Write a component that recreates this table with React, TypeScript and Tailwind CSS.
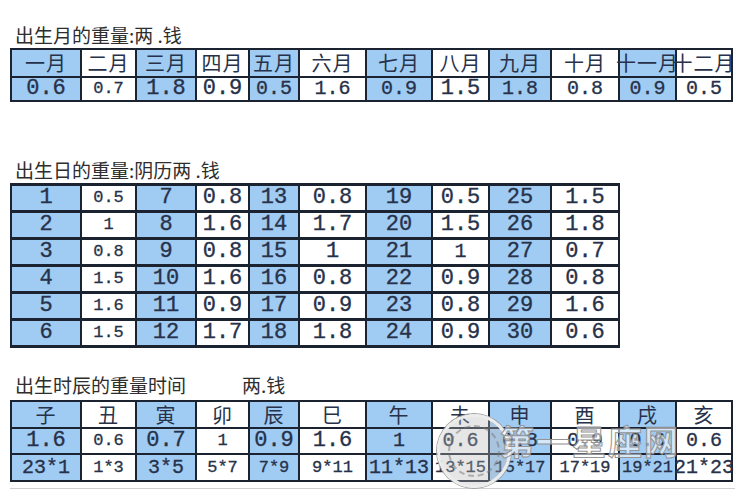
import React from "react";

const BLUE = "bg-[#a0cbf3]";
const WHITE = "bg-white";

type Cell = { t: string; s?: "sm" | "md" | "lg" | "cn" };

function C({ cell, blue, h }: { cell: Cell; blue: boolean; h: string }) {
  const size =
    cell.s === "cn"
      ? "text-[20px] tracking-[1px] font-['Noto_Sans_CJK_SC',sans-serif] font-normal"
      : cell.s === "sm"
      ? "text-[17px] font-['Liberation_Mono',monospace] [-webkit-text-stroke:0.3px_#27324a]"
      : cell.s === "md"
      ? "text-[20px] font-['Liberation_Mono',monospace] [-webkit-text-stroke:0.3px_#27324a]"
      : "text-[22px] font-['Liberation_Mono',monospace] [-webkit-text-stroke:0.35px_#27324a]";
  return (
    <div
      className={`${blue ? BLUE : WHITE} ${h} flex items-center justify-center whitespace-nowrap text-[#27324a] leading-[20px] ${size}`}
    >
      {cell.t}
    </div>
  );
}

const months = ["一月", "二月", "三月", "四月", "五月", "六月", "七月", "八月", "九月", "十月", "十一月", "十二月"];
const monthVals: Cell[] = [
  { t: "0.6" }, { t: "0.7", s: "sm" }, { t: "1.8" }, { t: "0.9" }, { t: "0.5", s: "md" }, { t: "1.6", s: "md" },
  { t: "0.9", s: "md" }, { t: "1.5" }, { t: "1.8", s: "md" }, { t: "0.8", s: "md" }, { t: "0.9", s: "md" }, { t: "0.5", s: "md" },
];

const dayRows: Cell[][] = [
  [{ t: "1" }, { t: "0.5", s: "sm" }, { t: "7" }, { t: "0.8" }, { t: "13" }, { t: "0.8" }, { t: "19" }, { t: "0.5" }, { t: "25" }, { t: "1.5" }],
  [{ t: "2" }, { t: "1", s: "sm" }, { t: "8" }, { t: "1.6" }, { t: "14" }, { t: "1.7" }, { t: "20" }, { t: "1.5" }, { t: "26" }, { t: "1.8" }],
  [{ t: "3" }, { t: "0.8", s: "sm" }, { t: "9" }, { t: "0.8" }, { t: "15" }, { t: "1" }, { t: "21" }, { t: "1", s: "md" }, { t: "27" }, { t: "0.7" }],
  [{ t: "4" }, { t: "1.5", s: "sm" }, { t: "10" }, { t: "1.6" }, { t: "16" }, { t: "0.8" }, { t: "22" }, { t: "0.9" }, { t: "28" }, { t: "0.8" }],
  [{ t: "5" }, { t: "1.6", s: "sm" }, { t: "11" }, { t: "0.9" }, { t: "17" }, { t: "0.9" }, { t: "23" }, { t: "0.8" }, { t: "29" }, { t: "1.6" }],
  [{ t: "6" }, { t: "1.5", s: "sm" }, { t: "12" }, { t: "1.7" }, { t: "18" }, { t: "1.8" }, { t: "24" }, { t: "0.9" }, { t: "30" }, { t: "0.6" }],
];

const hours = ["子", "丑", "寅", "卯", "辰", "巳", "午", "未", "申", "酉", "戌", "亥"];
const hourVals: Cell[] = [
  { t: "1.6" }, { t: "0.6", s: "sm" }, { t: "0.7" }, { t: "1", s: "sm" }, { t: "0.9" }, { t: "1.6" },
  { t: "1", s: "md" }, { t: "0.6", s: "md" }, { t: "0.8", s: "md" }, { t: "0.9", s: "md" }, { t: "0.6", s: "md" }, { t: "0.6", s: "md" },
];
const hourRange: Cell[] = [
  { t: "23*1", s: "md" }, { t: "1*3", s: "sm" }, { t: "3*5", s: "md" }, { t: "5*7", s: "sm" }, { t: "7*9", s: "sm" }, { t: "9*11", s: "sm" },
  { t: "11*13", s: "md" }, { t: "13*15", s: "sm" }, { t: "15*17", s: "sm" }, { t: "17*19", s: "sm" }, { t: "19*21", s: "sm" }, { t: "21*23", s: "md" },
];

const titleCls =
  "h-[22px] leading-[22px] pl-[5px] text-[19px] text-[#2e2e2e] font-normal font-['Noto_Sans_CJK_SC',sans-serif] whitespace-nowrap";

export default function App() {
  return (
    <div className="relative w-[750px] h-[500px] bg-white overflow-hidden">
      <div className="flex flex-col pl-[10px] pt-[24px]">
        <div className={titleCls}>出生月的重量:两 .钱</div>
        <div className="mt-[2px] w-fit grid grid-cols-[68px_53px_58px_51px_48px_65px_64px_55px_60px_66px_55px_54px] gap-x-[2px] gap-y-[2px] p-[2px] bg-[#1b2230]">
          {months.map((m, i) => (
            <C key={"m" + i} cell={{ t: m, s: "cn" }} blue={i % 2 === 0} h="h-[26px]" />
          ))}
          {monthVals.map((v, i) => (
            <C key={"v" + i} cell={v} blue={i % 2 === 0} h="h-[22px]" />
          ))}
        </div>

        <div className={`${titleCls} mt-[57px]`}>出生日的重量:阴历两 .钱</div>
        <div className="mt-[2px] w-fit grid grid-cols-[68px_53px_58px_51px_48px_65px_64px_55px_60px_66px] gap-x-[2px] gap-y-[3px] py-[3px] px-[2px] bg-[#1b2230]">
          {dayRows.flatMap((row, r) =>
            row.map((v, i) => <C key={r + "-" + i} cell={v} blue={i % 2 === 0} h="h-[24px]" />)
          )}
        </div>

        <div className={`${titleCls} mt-[26px] flex`}>
          <span>出生时辰的重量时间</span>
          <span className="ml-[56px]">两.钱</span>
        </div>
        <div className="mt-[4px] w-fit grid grid-cols-[68px_53px_58px_51px_48px_65px_64px_55px_60px_66px_55px_54px] gap-x-[2px] gap-y-[2px] p-[2px] bg-[#1b2230]">
          {hours.map((m, i) => (
            <C key={"h" + i} cell={{ t: m, s: "cn" }} blue={i % 2 === 0} h="h-[25px]" />
          ))}
          {hourVals.map((v, i) => (
            <C key={"hv" + i} cell={v} blue={i % 2 === 0} h="h-[24px]" />
          ))}
          {hourRange.map((v, i) => (
            <C key={"hr" + i} cell={v} blue={i % 2 === 0} h="h-[25px]" />
          ))}
        </div>
        <div className="mt-[6px] w-[725px] h-[1px] bg-[#d0d0d0]" />
      </div>

      {/* watermark */}
      <div className="absolute left-[437px] top-[414px] w-[74px] h-[74px] rounded-full border-[3px] border-[#ececec] bg-[#b8b8b8]/35 shadow-[0_0_0_1px_#a0a0a0]">
        <div className="absolute inset-[8px] rounded-full border-2 border-dashed border-[#777]/50" />
      </div>
      <div className="absolute left-[500px] top-[424px] text-[34px] leading-none tracking-[2px] font-bold text-white/55 [-webkit-text-stroke:1px_#949494] font-['Noto_Sans_CJK_SC',sans-serif] whitespace-nowrap">
        第一星座网
      </div>
    </div>
  );
}
